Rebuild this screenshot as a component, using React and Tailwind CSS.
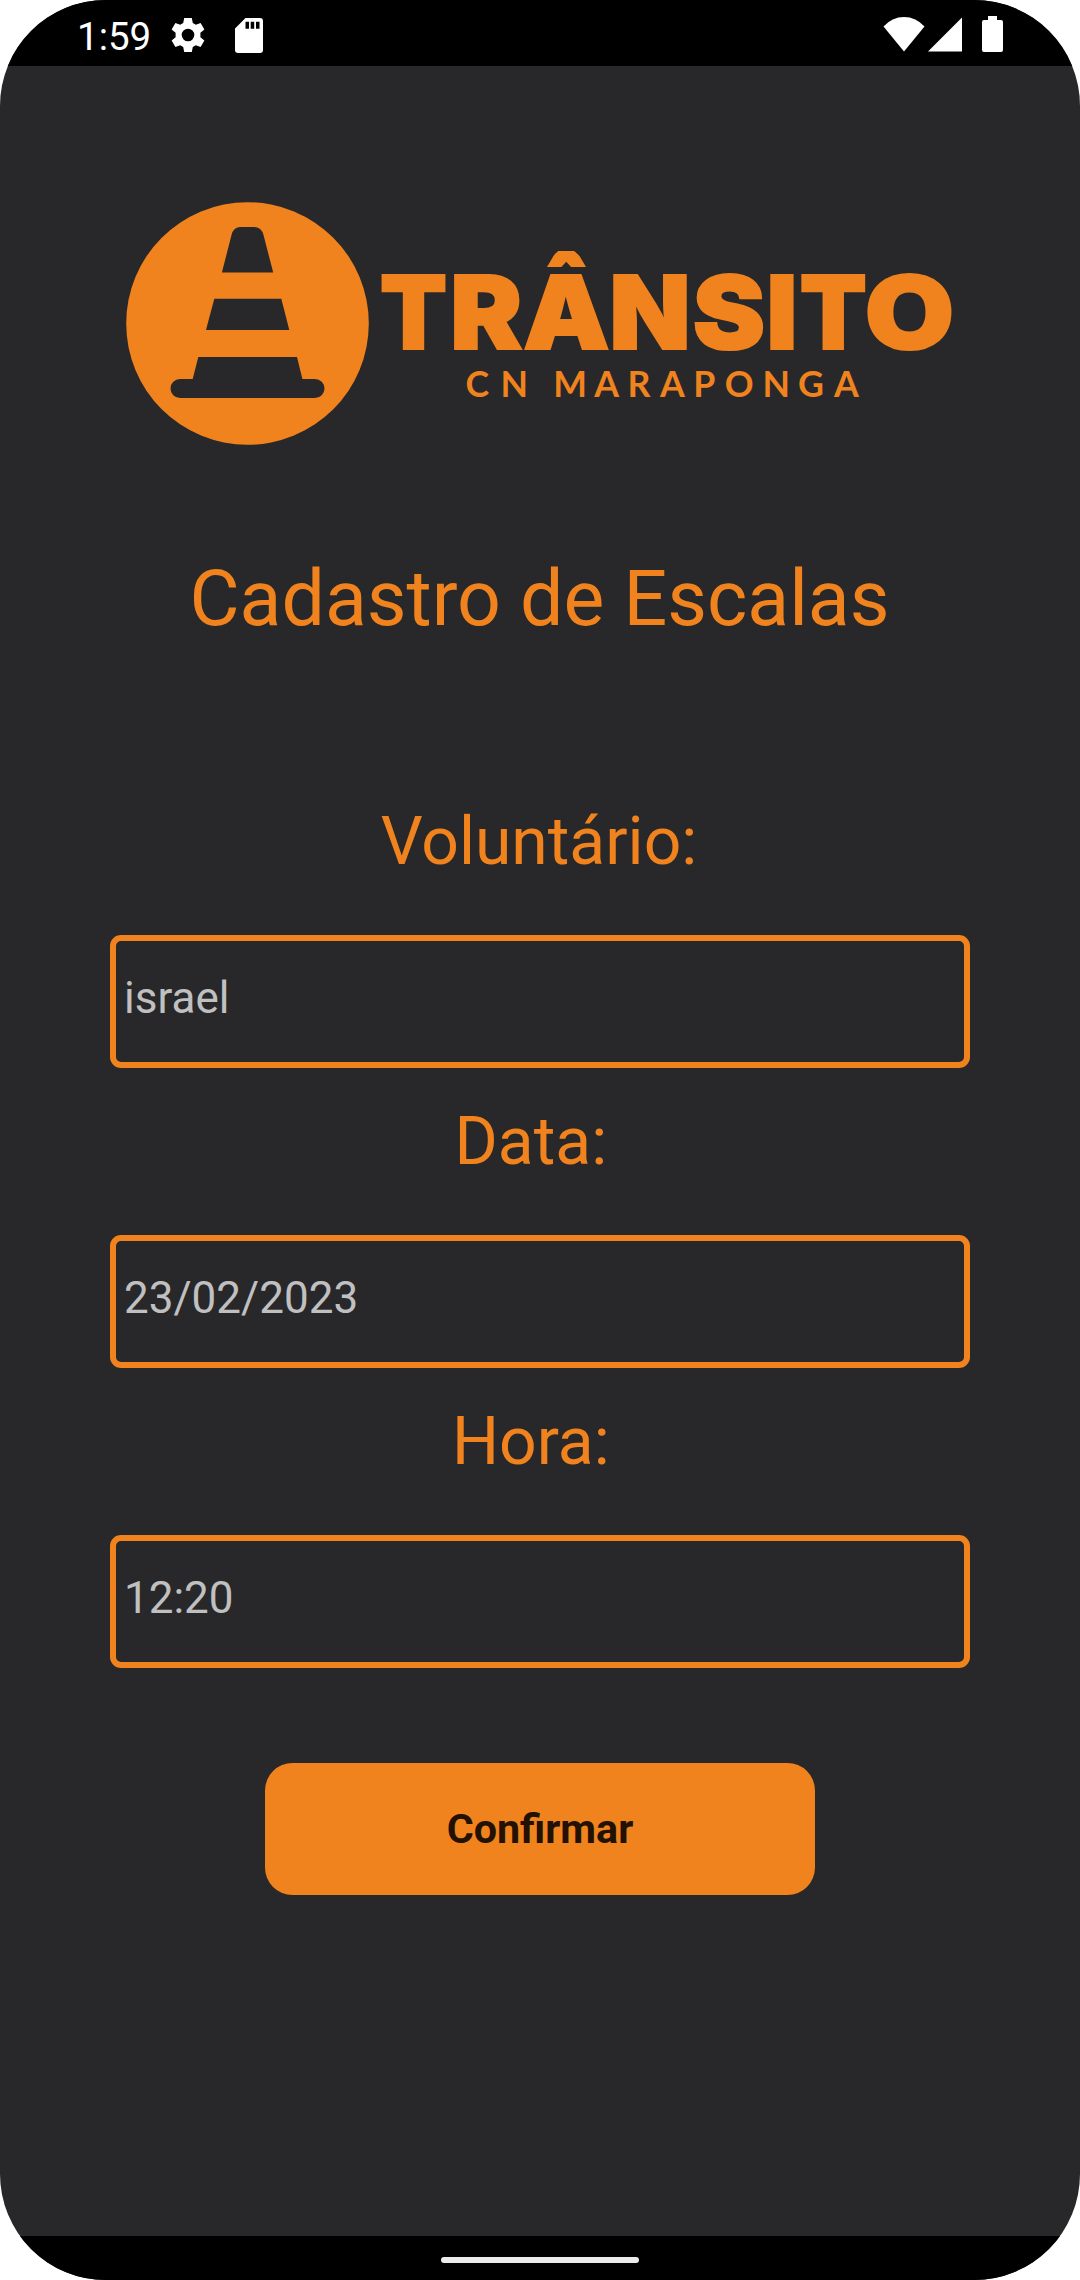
const fields = [
  { label: "Voluntário:", value: "israel" },
  { label: "Data:\u00a0", value: "23/02/2023" },
  { label: "Hora:\u00a0", value: "12:20" },
];

const wordmark = [
  { ch: "T", x: 270, w: 67 },
  { ch: "R", x: 340.2, w: 72 },
  { ch: "Â", x: 413.2, w: 86.4 },
  { ch: "N", x: 499.5, w: 81 },
  { ch: "S", x: 582.8, w: 72.3 },
  { ch: "I", x: 656.4, w: 30.9 },
  { ch: "T", x: 689.8, w: 67 },
  { ch: "O", x: 754.7, w: 89.4 },
];

function StatusBar() {
  return (
    <header className="flex h-[66px] shrink-0 items-center justify-between bg-black text-white">
      <div className="flex items-center pl-[77px]">
        <span className="w-[94px] pt-[7px] text-[38.5px] leading-[66px]">1:59</span>
        <svg viewBox="0 0 34 36" className="mt-[4px] h-9 w-[34px]" fill="currentColor">
          <path
            fillRule="evenodd"
            d="M13.2 1h7.6l1 5 3 1.700 4.800-1.800 3.800 6.500-4 3.300v4.600l4 3.300-3.800 6.500-4.800-1.800-3 1.700-1 5h-7.600l-1-5-3-1.700-4.800 1.800L.6 23.600l4-3.300v-4.600l-4-3.300 3.800-6.500 4.800 1.800 3-1.700zM17 11.700a6.300 6.300 0 1 0 0 12.600 6.300 6.300 0 0 0 0-12.600z"
          />
        </svg>
        <svg viewBox="0 0 28 35" className="ml-[30px] mt-[4px] h-[35px] w-7" fill="currentColor">
          <path
            fillRule="evenodd"
            d="M10.500 0H25a3 3 0 0 1 3 3v29a3 3 0 0 1-3 3H3a3 3 0 0 1-3-3V10.500zM10.500 3.700v7h3.500v-7zM15.700 3.700v7h3.500v-7zM21 3.700v7h3.500v-7z"
          />
        </svg>
      </div>
      <div className="flex items-center pr-[77px] pt-[2px]">
        <svg viewBox="0 0 42 36" className="h-9 w-[42px]" fill="currentColor">
          <path d="M.5 10.500Q9 1 21 1t20.500 9.500L21 35.500z" />
        </svg>
        <svg viewBox="0 0 36 36" className="ml-[2px] h-9 w-9" fill="currentColor">
          <path d="M35 1.500v34H1z" />
        </svg>
        <svg viewBox="0 0 21 36" className="ml-[19px] h-9 w-[21px]" fill="currentColor">
          <path d="M6 0h9v4h4q2 0 2 2v28q0 2-2 2H2q-2 0-2-2V6q0-2 2-2h4z" />
        </svg>
      </div>
    </header>
  );
}

function Logo() {
  return (
    <svg
      viewBox="0 0 860 260"
      className="mt-[126px] h-[260px] w-[860px] shrink-0"
      fill="#f0831e"
      role="img"
      aria-label="Trânsito CN Maraponga"
    >
      <circle cx="137.500" cy="131.500" r="121.300" />
      <g fill="#28282a">
        <path d="M130.500 35h13.500q7.500 0 9.500 8l9.700 37.500h-51.300L121.500 43q2-8 9-8z" />
        <path d="M104.300 106.800h67l8 31.200H96z" />
        <path d="M88.300 165h98.700l5.400 22H205a9.500 9.500 0 0 1 0 19H70a9.500 9.500 0 0 1 0-19h12.700z" />
      </g>
      <text
        y="157.400"
        stroke="#f0831e"
        strokeWidth="2.200"
        className="font-['Inter',sans-serif] text-[101.5px] font-black"
      >
        {wordmark.map(({ ch, x, w }) => (
          <tspan key={x} x={x} textLength={w} lengthAdjust="spacingAndGlyphs">
            {ch}
          </tspan>
        ))}
      </text>
      {/* Gap between the circumflex and its letter */}
      <path fill="#28282a" d="M418 75h78v7h-78zM418 58h29l-10 17h-19zM496 58h-30l10 17h20z" />
      <text
        x="355.600 390.600 430 443.300 484.300 517.600 549.900 583.300 614.700 652.600 688 723.900"
        y="204.700"
        className="font-['Lato',sans-serif] text-[35.7px] font-bold"
      >
        CN MARAPONGA
      </text>
    </svg>
  );
}

function Field({ label, value }) {
  return (
    <label className="mb-[35.5px] flex flex-col items-center gap-[54px]">
      <span className="pr-[2px] text-[66px] leading-[78px] text-[#f0831e]">{label}</span>
      <input
        readOnly
        value={value}
        className="h-[132.5px] w-[860px] rounded-[11px] border-[6px] border-[#f0831e] bg-transparent pb-[6px] pl-[8px] text-[44px] text-[#c0c0c0] outline-none"
      />
    </label>
  );
}

export default function App() {
  return (
    <div className="h-[2280px] w-[1080px] bg-white">
      <div className="flex h-full flex-col overflow-hidden rounded-[106px] bg-[#28282a] font-['Roboto',sans-serif]">
        <StatusBar />
        <main className="flex flex-1 flex-col items-center">
          <Logo />
          <h1 className="mt-[102px] mb-[159px] pr-[1px] text-[77px] leading-[90px] text-[#f0831e]">
            Cadastro de Escalas
          </h1>
          {fields.map((f) => (
            <Field key={f.label} {...f} />
          ))}
          <button className="mt-[60px] h-[132px] w-[550px] rounded-[27.5px] bg-[#f0831e] pt-[2px] text-[41.25px] font-bold text-[#231204]">
            Confirmar
          </button>
        </main>
        <footer className="flex h-11 shrink-0 items-center justify-center bg-black">
          <div className="mt-[4px] h-[6px] w-[198px] rounded-full bg-[#ececec]" />
        </footer>
      </div>
    </div>
  );
}
